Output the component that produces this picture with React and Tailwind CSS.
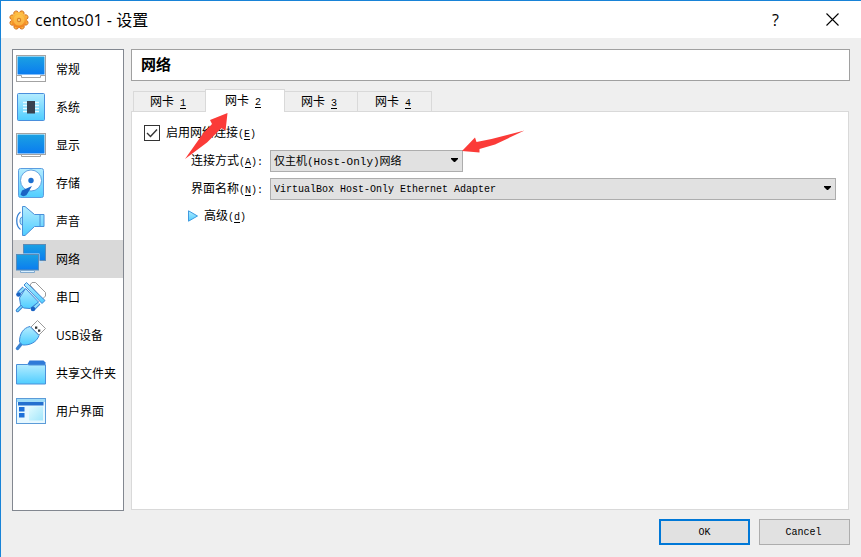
import React, { useState } from 'react';

const Monitor = () => (
  <>
    <rect x="1.5" y="2.5" width="29" height="26" fill="#fff" stroke="#a3a3a3" />
    <rect x="2.5" y="3.5" width="27" height="18" fill="url(#screen)" />
    <path d="M1.5 22.5h5v2h19v-2h5" fill="#fff" stroke="#a3a3a3" />
  </>
);

const Chip = () => (
  <>
    <rect x="2.5" y="2.5" width="27" height="27" rx="1" fill="url(#sky)" stroke="#4a8fdc" />
    <path d="M8 11.5h16M8 14.5h16M8 17.5h16M8 20.5h16" stroke="#e4fbff" strokeWidth="1.4" />
    <rect x="12" y="10" width="8" height="12.5" fill="#39424f" />
  </>
);

const Display = () => (
  <>
    <rect x="1.5" y="4.5" width="29" height="21" fill="#fff" stroke="#a3a3a3" />
    <rect x="2.5" y="5.5" width="27" height="19" fill="url(#screen)" />
    <path d="M6.5 25.5v2h19v-2z" fill="#fff" stroke="#a3a3a3" />
  </>
);

const Disk = () => (
  <>
    <rect x="3.5" y="1.5" width="25" height="29" rx="2" fill="url(#sky)" stroke="#5b9de0" />
    <circle cx="16" cy="13.5" r="10.5" fill="#fff" stroke="#4a90d9" strokeWidth="0.8" />
    <circle cx="16" cy="13.5" r="2.7" fill="#1d6fd0" />
    <path d="M5.5 27.5 7 23.5l10-4.5-4.5 7.5a4 4 0 0 1-7 1z" fill="#1a63c4" />
  </>
);

const Speaker = () => (
  <>
    <path d="M5.5 7C.5 10.500.5 21 5.500 24.500" fill="none" stroke="#3a82d2" strokeWidth="1.300" />
    <path d="M8 11.500c-4 .5-4 8.500 0 9" fill="#a5e8ff" stroke="#4a90d9" />
    <path d="M7.5 1.5h2.500l9.500 8h9.500v12h-9.500l-9.500 9H7.5z" fill="url(#sky)" stroke="#4a90d9" />
    <path d="M25 9.5v12" stroke="#4a90d9" />
  </>
);

const Network = () => (
  <>
    <rect x="8.5" y="1.5" width="22" height="16" fill="url(#screen)" stroke="#5d8bb5" />
    <path d="M25 18h3v2h-3z" fill="#c9dff1" />
    <rect x="1.5" y="11.5" width="22" height="15" fill="url(#screen)" stroke="#c9dff1" strokeWidth="2" />
    <rect x="1.5" y="11.5" width="22" height="15.5" fill="url(#screen)" stroke="#5d8bb5" />
    <path d="M5.5 27.5h14v2h-14z" fill="#d8efff" stroke="#7fa9cf" />
  </>
);

const Serial = () => (
  <>
    <path d="m15 4 2-2.500h3.500L30.500 11.500V15l-3 3z" fill="#fff" stroke="#9a9a9a" />
    <path d="m2.500 29.500 4.500-4.500" stroke="#3a82d2" strokeWidth="3.500" strokeLinecap="round" />
    <path d="m2.500 29.500 4.500-4.500" stroke="#7ddcfb" strokeWidth="1.500" strokeLinecap="round" />
    <path d="m9 7-5.500 5.500M24 22l-5.500 5.500" stroke="#3f87d6" strokeWidth="4" />
    <path d="m9 7-5.500 5.500M24 22l-5.500 5.500" stroke="#8fe0fd" strokeWidth="2" />
    <path d="M10.500 7.500 4.500 17l1 6.500 3 3.500 6.500.5L23.500 21z" fill="url(#sky)" stroke="#3f87d6" />
    <path d="m9 4 2.500-2.500L30 19.500 27 22.500z" fill="url(#sky)" stroke="#3f87d6" />
    <circle cx="3.5" cy="13.5" r="2.300" fill="#1a63c4" />
    <circle cx="18" cy="28" r="2.300" fill="#1a63c4" />
  </>
);

const Usb = () => (
  <>
    <path d="m22.5 1.5 8 8-6.5 6.500-8-8z" fill="#fff" stroke="#9a9a9a" />
    <rect x="20" y="7.500" width="2.300" height="2.300" fill="#333" />
    <rect x="23" y="10.500" width="2.300" height="2.300" fill="#333" />
    <path d="m2.500 29.500 4-5" stroke="#3a82d2" strokeWidth="3.500" strokeLinecap="round" />
    <path d="M15 7.500 24 16.500C22 23 15 26.500 7.500 26L4.500 23C4.500 15 8 9 15 7.500z" fill="url(#sky)" stroke="#3f87d6" />
  </>
);

const Folder = () => (
  <>
    <path d="m12 8 2.500-4.500h14l2 2V9H12z" fill="#2f7ad8" />
    <path d="M1.500 7.500h11l2 .5h16v19h-29z" fill="url(#sky)" stroke="#4a90d9" />
  </>
);

const Interface = () => (
  <>
    <rect x="1.5" y="3.5" width="29" height="25" fill="#e6f8ff" stroke="#5b9bd8" />
    <rect x="2" y="4" width="28" height="3" fill="#9edcf8" />
    <rect x="3" y="7" width="25.5" height="3.5" fill="#2470cf" />
    <rect x="4" y="12" width="5.5" height="4.5" fill="#1d6fd8" />
    <rect x="4" y="18" width="5.5" height="4.5" fill="#1d6fd8" />
    <rect x="14" y="11.5" width="14" height="14" fill="url(#pale)" />
  </>
);

const pages = [
  { name: '常规', Icon: Monitor },
  { name: '系统', Icon: Chip },
  { name: '显示', Icon: Display },
  { name: '存储', Icon: Disk },
  { name: '声音', Icon: Speaker },
  { name: '网络', Icon: Network },
  { name: '串口', Icon: Serial },
  { name: 'USB设备', Icon: Usb },
  { name: '共享文件夹', Icon: Folder },
  { name: '用户界面', Icon: Interface },
];

// Shared gradients for the sidebar icons
const Gradients = () => (
  <svg className="absolute size-0" aria-hidden="true">
    <defs>
      <linearGradient id="screen" x1="0" y1="0" x2="0" y2="1">
        <stop offset="0" stopColor="#1ba1e2" />
        <stop offset="1" stopColor="#0a7cf0" />
      </linearGradient>
      <linearGradient id="sky" x1="0" y1="0" x2="0" y2="1">
        <stop offset="0" stopColor="#b4ecff" />
        <stop offset="1" stopColor="#4fcdff" />
      </linearGradient>
      <linearGradient id="pale" x1="0" y1="0" x2="1" y2="1">
        <stop offset="0" stopColor="#e2fbff" />
        <stop offset="1" stopColor="#a2e6fb" />
      </linearGradient>
      <linearGradient id="gear" x1="0" y1="0" x2="0" y2="1">
        <stop offset="0" stopColor="#ffc64a" />
        <stop offset="1" stopColor="#f07c1c" />
      </linearGradient>
    </defs>
  </svg>
);

const GearLogo = () => (
  <svg className="size-5" viewBox="0 0 20 20" aria-hidden="true">
    <g fill="url(#gear)" stroke="#c9641c" strokeWidth="0.800">
      {[0, 45, 90, 135, 180, 225, 270, 315].map((angle) => (
        <circle key={angle} cx="10" cy="2.8" r="2.400" transform={`rotate(${angle + 22} 10 10)`} />
      ))}
    </g>
    <circle cx="10" cy="10" r="7.800" fill="url(#gear)" />
    <circle cx="10" cy="10" r="5.500" fill="#ffcb55" opacity="0.600" />
    <circle cx="10" cy="10" r="2.200" fill="#d9822a" />
    <circle cx="10" cy="10" r="0.900" fill="#fbe3a5" />
  </svg>
);

// Latin part of a label, with the shortcut letter underlined
const Hotkey = ({ before = '', letter, after = '' }) => (
  <span className="text-[10px]">
    {before}
    <span className="underline underline-offset-2">{letter}</span>
    {after}
  </span>
);

const Select = ({ id, className, options }) => (
  <div className={`relative ${className}`}>
    <select
      id={id}
      className="block h-[22px] w-full appearance-none border border-[#adadad] bg-[#e1e1e1] pt-[2px] pr-6 pl-[3px]"
    >
      {options.map((option) => (
        <option key={option}>{option}</option>
      ))}
    </select>
    <svg className="pointer-events-none absolute top-2 right-[5px] h-1 w-[7px]" viewBox="0 0 7 4">
      <path d="M0 0h7v1L4 4H3L0 1z" fill="#000" />
    </svg>
  </div>
);

export default function App() {
  const [page, setPage] = useState('网络');
  const [adapter, setAdapter] = useState(2);

  return (
    <div className="relative flex min-h-screen flex-col border-t border-l border-[#1883d7] bg-[#efefef] text-xs text-black">
      <Gradients />

      <header className="flex h-[37px] items-center bg-white pl-2 font-['Open_Sans','Noto_Sans_CJK_SC',sans-serif]">
        <GearLogo />
        <h1 className="ml-[6px] flex-1 text-base">centos01 - 设置</h1>
        <button className="h-full w-[57px] text-base" aria-label="帮助">?</button>
        <button className="flex h-full w-[57px] items-center justify-center" aria-label="关闭">
          <svg className="size-[13px]" viewBox="0 0 13 13">
            <path d="m.5.5 12 12M12.500.5l-12 12" stroke="#000" strokeWidth="1.100" />
          </svg>
        </button>
      </header>

      <div className="flex flex-1 gap-[7px] px-[11px] pt-[11px]">
        <nav className="w-28 shrink-0 border border-[#828790] bg-white font-['Open_Sans','Noto_Sans_CJK_SC',sans-serif]">
          {pages.map(({ name, Icon }) => (
            <button
              key={name}
              onClick={() => setPage(name)}
              className={`flex h-[38px] w-full items-center gap-[9px] pl-[2px] whitespace-nowrap ${page === name ? 'bg-[#d9d9d9]' : ''}`}
            >
              <svg className="size-8 shrink-0" viewBox="0 0 32 32" aria-hidden="true">
                <Icon />
              </svg>
              <span className="pt-[2px]">{name}</span>
            </button>
          ))}
        </nav>

        <main className="flex min-w-0 flex-1 flex-col font-['Liberation_Mono','Noto_Sans_CJK_SC',monospace]">
          <h2 className="flex h-8 items-center border border-[#a0a0a0] bg-white pt-1 pl-[9px] text-[15px] font-bold">{page}</h2>

          <div className="mt-2 flex h-[22px] items-end pl-[2px]" role="tablist">
            {[1, 2, 3, 4].map((n) => (
              <button
                key={n}
                role="tab"
                aria-selected={adapter === n}
                onClick={() => setAdapter(n)}
                className={
                  adapter === n
                    ? 'relative z-10 -mx-px -mb-px h-[23px] w-20 border border-b-0 border-[#d9d9d9] bg-white pt-px pr-1'
                    : 'h-5 w-[74px] border border-b-0 border-l-0 border-[#d9d9d9] pt-[2px] pr-[3px] first:w-[73px] first:border-l'
                }
              >
                网卡<Hotkey before=" " letter={n} />
              </button>
            ))}
          </div>

          <section className="mr-px mb-px flex-1 border border-[#d9d9d9] bg-white px-3 pt-3" role="tabpanel">
            <label className="flex h-[18px] items-center gap-[6px]">
              <span className="relative flex size-4">
                <input
                  type="checkbox"
                  defaultChecked
                  className="peer size-4 appearance-none border border-[#333] bg-white"
                />
                <svg className="pointer-events-none absolute inset-0 hidden size-4 peer-checked:block" viewBox="0 0 16 16">
                  <path d="m3 8 3.500 3.500L13 4.500" fill="none" stroke="#333" strokeWidth="1.400" />
                </svg>
              </span>
              <span className="pt-[2px]">
                启用网络连接<Hotkey before="(" letter="E" after=")" />
              </span>
            </label>

            <div className="mt-2 ml-[45px] grid grid-cols-[74px_1fr] items-center gap-x-[7px] gap-y-[6px]">
              <label htmlFor="attached" className="pt-[2px] text-right whitespace-nowrap">
                连接方式<Hotkey before="(" letter="A" after="):" />
              </label>
              <Select id="attached" className="w-[193px] text-[11px]" options={['仅主机(Host-Only)网络', '桥接网卡', '内部网络']} />

              <label htmlFor="adapter" className="pt-[2px] text-right whitespace-nowrap">
                界面名称<Hotkey before="(" letter="N" after="):" />
              </label>
              <Select id="adapter" className="text-[10px]" options={['VirtualBox Host-Only Ethernet Adapter']} />
            </div>

            <button className="mt-[6px] ml-[44px] flex h-5 items-center gap-[6px]">
              <svg className="h-3 w-[10px]" viewBox="0 0 10 12" aria-hidden="true">
                <path d="M.5.8v10.400L9.500 6z" fill="url(#sky)" stroke="#3f9be0" />
              </svg>
              <span className="pt-[2px]">
                高级<Hotkey before="(" letter="d" after=")" />
              </span>
            </button>
          </section>
        </main>
      </div>

      <footer className="flex justify-end gap-[9px] px-[11px] pt-2 pb-3 font-['Liberation_Mono',monospace] text-[10px]">
        <button className="h-[26px] w-[91px] border-2 border-[#0078d7] bg-[#e1e1e1] pt-[2px]">OK</button>
        <button className="h-[26px] w-[91px] border border-[#adadad] bg-[#e1e1e1] pt-[2px] pr-[2px]">Cancel</button>
      </footer>

      {/* Red pointers over the tab and the first drop-down */}
      <svg className="pointer-events-none absolute top-[111px] left-[183px] z-20 h-12 w-[46px]" viewBox="0 0 46 48" aria-hidden="true">
        <path d="M43.500 1 26 8l2 4-9 9.500L1 47l22-16.500L37.500 16l4 3z" fill="#fb3b38" />
      </svg>
      <svg className="pointer-events-none absolute top-[129px] left-[460px] z-20 h-6 w-16" viewBox="0 0 64 24" aria-hidden="true">
        <path d="M1 21 14 7.500l1.500 4.500 15-3L63.500.5 34 14.500 18.500 19v3.500z" fill="#fb3b38" />
      </svg>
    </div>
  );
}
